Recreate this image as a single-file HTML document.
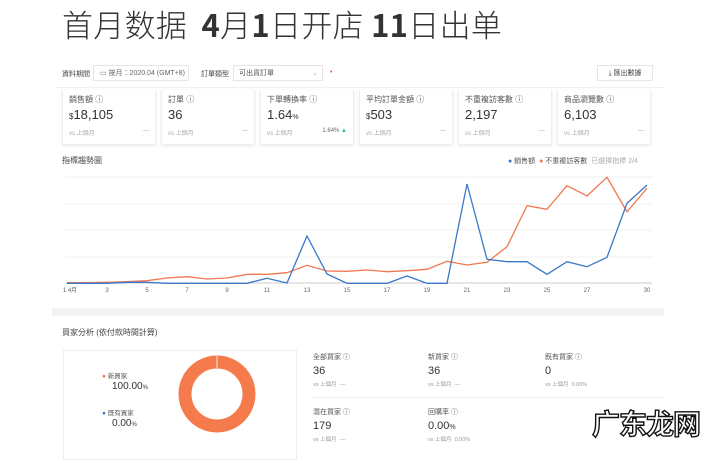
<!DOCTYPE html><html><head><meta charset="utf-8"><style>
body{margin:0;width:720px;height:455px;background:#fff;font-family:"Liberation Sans","Noto Sans CJK TC",sans-serif;position:relative;overflow:hidden;color:#333}
.a{position:absolute;white-space:nowrap}
.card{position:absolute;top:90px;width:92px;height:54px;border:1px solid #eee;border-top:none;box-shadow:0 1px 3px rgba(0,0,0,.08);background:#fff}
.card .l{position:absolute;left:6px;top:4px;font-size:8px;color:#555}
.card .v{position:absolute;left:6px;top:17px;font-size:13px;color:#333}
.card .s{position:absolute;left:6px;top:38px;font-size:6px;color:#aaa}
.card .d{position:absolute;right:6px;top:38px;font-size:6px;color:#aaa}
.st .l{font-size:7px;color:#555}.st .v{font-size:11px;color:#333;margin-top:3px}.st .s{font-size:5.5px;color:#999;margin-top:3px}
</style></head><body>
<div class="a" style="left:62px;top:1px;font-size:31px;color:#333;font-family:'Noto Sans CJK SC',sans-serif;font-weight:300;letter-spacing:0.3px">首月数据 &nbsp;<b style="font-weight:700">4</b>月<b style="font-weight:700">1</b>日开店 <b style="font-weight:700">11</b>日出单</div>
<div class="a" style="left:62px;top:69px;font-size:7px;color:#444">資料期間</div>
<div class="a" style="left:93px;top:65px;width:96px;height:16px;border:1px solid #e5e5e5;font-size:7px;color:#666;line-height:16px;padding-left:6px;box-sizing:border-box">▭ 按月：2020.04 (GMT+8)</div>
<div class="a" style="left:201px;top:69px;font-size:7px;color:#444">訂單類型</div>
<div class="a" style="left:233px;top:65px;width:90px;height:16px;border:1px solid #e5e5e5;font-size:7px;color:#555;line-height:16px;padding-left:5px;box-sizing:border-box">可出貨訂單<span style="float:right;margin-right:4px;color:#bbb">⌄</span></div>
<div class="a" style="left:330px;top:69px;font-size:7px;color:#e55">•</div>
<div class="a" style="left:597px;top:65px;width:56px;height:16px;border:1px solid #e5e5e5;font-size:7px;color:#444;line-height:16px;text-align:center;box-sizing:border-box">⤓ 匯出數據</div>
<div class="a" style="left:55px;top:87px;width:610px;height:1px;background:#f0f0f0"></div>
<div class="card" style="left:62px"><div class="l">銷售額 ⓘ</div><div class="v"><span style="font-size:8px">$</span>18,105</div><div class="s">vs 上個月</div><div class="d">—</div></div>
<div class="card" style="left:161px"><div class="l">訂單 ⓘ</div><div class="v">36</div><div class="s">vs 上個月</div><div class="d">—</div></div>
<div class="card" style="left:260px"><div class="l">下單轉換率 ⓘ</div><div class="v">1.64<span style="font-size:7px">%</span></div><div class="s">vs 上個月</div><div class="d" style="color:#666">1.64% <span style="color:#2b9">▲</span></div></div>
<div class="card" style="left:359px"><div class="l">平均訂單金額 ⓘ</div><div class="v"><span style="font-size:8px">$</span>503</div><div class="s">vs 上個月</div><div class="d">—</div></div>
<div class="card" style="left:458px"><div class="l">不重複訪客數 ⓘ</div><div class="v">2,197</div><div class="s">vs 上個月</div><div class="d">—</div></div>
<div class="card" style="left:557px"><div class="l">商品瀏覽數 ⓘ</div><div class="v">6,103</div><div class="s">vs 上個月</div><div class="d">—</div></div>
<div class="a" style="left:62px;top:155px;font-size:8px;color:#444">指標趨勢圖</div>
<div class="a" style="left:508px;top:156px;font-size:7px;color:#555"><span style="color:#3a78c9">●</span> 銷售額 &nbsp;<span style="color:#f07850">●</span> 不重複訪客數 &nbsp;<span style="color:#aaa">已選擇指標 2/4</span></div>
<svg class="a" style="left:0;top:0" width="720" height="300">
<g stroke="#f2f2f2" stroke-width="1"><line x1="66" y1="177" x2="652" y2="177"/><line x1="66" y1="204" x2="652" y2="204"/><line x1="66" y1="230" x2="652" y2="230"/><line x1="66" y1="257" x2="652" y2="257"/></g>
<line x1="66" y1="283" x2="652" y2="283" stroke="#ccc"/>
<polyline fill="none" stroke="#f07850" stroke-width="1.3" points="67,282.7 87,282.7 107,282.3 127,281.7 147,280.7 167,278 187,276.7 207,279 227,278 247,274.3 267,274.3 287,272.7 307,265.3 327,271 347,271.3 367,270 387,271.7 407,270.7 427,269.3 447,261.3 467,265 487,262.3 507,246.7 527,205.7 547,209.3 567,185.7 587,196 607,177.3 627,211.7 647,188.3"/>
<polyline fill="none" stroke="#3a78c9" stroke-width="1.3" points="67,283.3 87,283.3 107,283.3 127,282.3 147,282.3 167,283.3 187,283.3 207,283.3 227,283.3 247,283.3 267,278.3 287,283 307,236 327,274 347,283.3 367,283.3 387,283.3 407,276 427,283.3 447,283.3 467,184 487,259.3 507,261.7 527,261.7 547,274.3 567,261.7 587,266.7 607,257.3 627,203.3 647,185"/>
<g font-size="6" fill="#666" text-anchor="middle"><text x="70" y="292">1 4月</text><text x="107" y="292">3</text><text x="147" y="292">5</text><text x="187" y="292">7</text><text x="227" y="292">9</text><text x="267" y="292">11</text><text x="307" y="292">13</text><text x="347" y="292">15</text><text x="387" y="292">17</text><text x="427" y="292">19</text><text x="467" y="292">21</text><text x="507" y="292">23</text><text x="547" y="292">25</text><text x="587" y="292">27</text><text x="647" y="292">30</text></g>
</svg>
<div class="a" style="left:52px;top:308px;width:612px;height:8px;background:#f3f3f3"></div>
<div class="a" style="left:62px;top:327px;font-size:8px;color:#444">買家分析 (依付款時間計算)</div>
<div class="a" style="left:63px;top:350px;width:234px;height:110px;border:1px solid #eee;box-sizing:border-box"></div>
<div class="a" style="left:102px;top:370px;font-size:6.5px;color:#555"><span style="color:#f07850">●</span> 新買家</div>
<div class="a" style="left:112px;top:381px;font-size:10px;color:#333">100.00<span style="font-size:6px">%</span></div>
<div class="a" style="left:102px;top:407px;font-size:6.5px;color:#555"><span style="color:#3a78c9">●</span> 既有買家</div>
<div class="a" style="left:112px;top:418px;font-size:10px;color:#333">0.00<span style="font-size:6px">%</span></div>
<svg class="a" style="left:178px;top:355px" width="80" height="80"><circle cx="39" cy="39" r="32" fill="none" stroke="#f57a4c" stroke-width="13"/><line x1="39" y1="1" x2="39" y2="13" stroke="#eee" stroke-width="1"/></svg>
<div class="a st" style="left:313px;top:352px"><div class="l">全部買家 ⓘ</div><div class="v">36</div><div class="s">vs 上個月 &nbsp;—</div></div>
<div class="a st" style="left:428px;top:352px"><div class="l">新買家 ⓘ</div><div class="v">36</div><div class="s">vs 上個月 &nbsp;—</div></div>
<div class="a st" style="left:545px;top:352px"><div class="l">既有買家 ⓘ</div><div class="v">0</div><div class="s">vs 上個月 &nbsp;0.00%</div></div>
<div class="a" style="left:313px;top:397px;width:350px;height:1px;background:#eee"></div>
<div class="a st" style="left:313px;top:407px"><div class="l">潛在買家 ⓘ</div><div class="v">179</div><div class="s">vs 上個月 &nbsp;—</div></div>
<div class="a st" style="left:428px;top:407px"><div class="l">回購率 ⓘ</div><div class="v">0.00<span style="font-size:7px">%</span></div><div class="s">vs 上個月 &nbsp;0.00%</div></div>
<div class="a" style="left:592px;top:403px;font-size:28px;font-family:'Noto Sans CJK SC',sans-serif;font-weight:700;color:#fff;-webkit-text-stroke:1.4px #111;letter-spacing:-1px">广东龙网</div>
</body></html>
